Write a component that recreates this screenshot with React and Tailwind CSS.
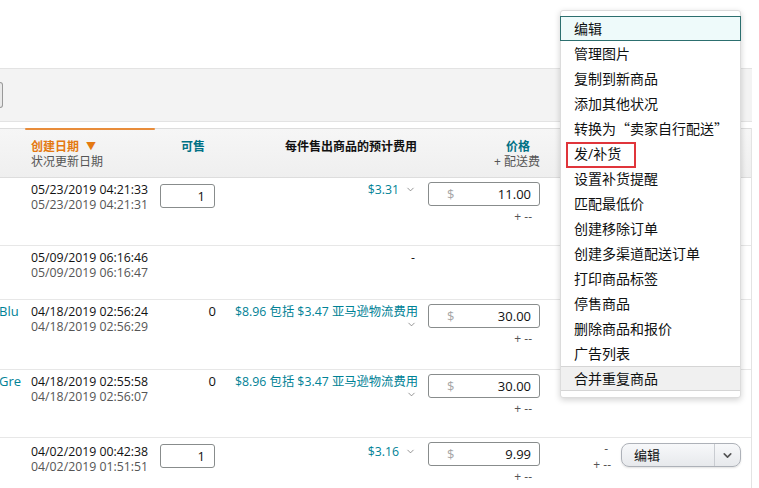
import React from "react";
import { ChevronDown } from "lucide-react";

const font = { fontFamily: '"Open Sans", "Noto Sans CJK SC", sans-serif' };
const cjk = { fontFamily: '"Noto Sans CJK SC", sans-serif' };

const menuItems = [
  "编辑",
  "管理图片",
  "复制到新商品",
  "添加其他状况",
  "转换为“卖家自行配送”",
  "发/补货",
  "设置补货提醒",
  "匹配最低价",
  "创建移除订单",
  "创建多渠道配送订单",
  "打印商品标签",
  "停售商品",
  "删除商品和报价",
  "广告列表",
  "合并重复商品",
];

const rows = [
  { h: "h-[68px]", pt: "pt-[4px]", name: "", created: "05/23/2019 04:21:33", updated: "05/23/2019 04:21:31", qty: "1", fee: "$3.31", price: "11.00" },
  { h: "h-[54px]", pt: "pt-[4px]", name: "", created: "05/09/2019 06:16:46", updated: "05/09/2019 06:16:47", fee: "-" },
  { h: "h-[70px]", pt: "pt-[4px]", name: "Blu", created: "04/18/2019 02:56:24", updated: "04/18/2019 02:56:29", zero: true, fee: "$8.96 包括 $3.47 亚马逊物流费用", long: true, price: "30.00" },
  { h: "h-[68px]", pt: "pt-[4px]", name: "Gre", created: "04/18/2019 02:55:58", updated: "04/18/2019 02:56:07", zero: true, fee: "$8.96 包括 $3.47 亚马逊物流费用", long: true, price: "30.00" },
  { h: "h-[52px]", pt: "pt-[6px]", name: "", created: "04/02/2019 00:42:38", updated: "04/02/2019 01:51:51", qty: "1", fee: "$3.16", price: "9.99", actions: true },
];

// split button used in the actions column
const EditButton = () => (
  <div className="flex h-[24px] w-[120px] overflow-hidden rounded-[8px] border border-[#adb1b8] bg-gradient-to-b from-[#f7f8fa] to-[#e7e9ec] shadow-[0_1px_2px_rgba(0,0,0,0.12)]">
    <div className="flex flex-1 items-center pl-[12px] text-[13px] text-[#0f1111]">编辑</div>
    <div className="flex w-[26px] items-center justify-center border-l border-[#c9ccd1]">
      <ChevronDown size={13} strokeWidth={3} className="text-[#555]" />
    </div>
  </div>
);

// menu label, quotes drawn with the CJK font so they get full-width cells
const MenuLabel = ({ text }) => {
  const parts = text.split(/([“”])/);
  return parts.map((p, i) =>
    p === "“" || p === "”" ? (
      <span key={i} style={cjk}>
        {p}
      </span>
    ) : (
      <span key={i}>{p}</span>
    )
  );
};

const Row = ({ r }) => (
  <div className={`grid grid-cols-[25px_130px_65px_202px_123px_206px] border-b border-[#e7e7e7] text-[12.3px] leading-[15px] ${r.h}`}>
    {/* product name, cut off on the left */}
    <div className={`overflow-hidden text-[13px] text-[#008296] whitespace-nowrap ${r.pt}`}>
      <span className="-ml-[1px]">{r.name}</span>
    </div>

    {/* dates */}
    <div className={`pl-[6px] whitespace-nowrap ${r.pt}`}>
      <div className="text-[#111]">{r.created}</div>
      <div className="text-[#555]">{r.updated}</div>
    </div>

    {/* available */}
    <div className="pt-[6px] pl-[5px]">
      {r.qty && (
        <div className="flex h-[24px] w-[55px] items-center justify-end rounded-[3px] border border-[#888c8c] pr-[9px] text-[13px] text-[#111]">
          {r.qty}
        </div>
      )}
      {r.zero && <div className="-mt-[2px] pr-[4px] text-right text-[13px] text-[#111]">0</div>}
    </div>

    {/* fees */}
    <div className={`pr-[4px] text-right ${r.pt}`}>
      {r.fee === "-" ? (
        <div className="pr-[3px] text-[#111]">-</div>
      ) : r.long ? (
        <div className="text-[#008296]">
          <div className="whitespace-nowrap">{r.fee}</div>
          <div className="flex justify-end pr-[1px]">
            <ChevronDown size={11} strokeWidth={1.5} className="text-[#666]" />
          </div>
        </div>
      ) : (
        <div className="flex items-center justify-end gap-[6px] text-[#008296]">
          <span>{r.fee}</span>
          <ChevronDown size={11} strokeWidth={1.5} className="mr-[2px] text-[#666]" />
        </div>
      )}
    </div>

    {/* price */}
    <div className="pl-[6px] pt-[4px]">
      {r.price && (
        <>
          <div className="flex h-[24px] w-[112px] items-center justify-between rounded-[3px] border border-[#888c8c] pl-[18px] pr-[8px] text-[13px]">
            <span className="text-[#a6a6a6]">$</span>
            <span className="text-[#111]">{r.price}</span>
          </div>
          <div className="mt-[3px] w-[104px] text-right text-[12px] text-[#555]">+ --</div>
        </>
      )}
    </div>

    {/* actions */}
    <div className="flex items-start pt-[3px]">
      {r.actions && (
        <>
          <div className="ml-[44px] w-[22px] text-right text-[12px] leading-[16px] text-[#555]">
            <div className="pr-[3px]">-</div>
            <div className="whitespace-nowrap">+ --</div>
          </div>
          <div className="ml-[10px] mt-[2px]">
            <EditButton />
          </div>
        </>
      )}
    </div>
  </div>
);

const App = () => {
  return (
    <div className="relative h-[488px] w-[759px] overflow-hidden bg-white" style={font}>
      <div className="h-[68px]" />

      {/* toolbar band */}
      <div className="flex h-[54px] w-[752px] items-center border-y border-[#e3e3e3] bg-[#f3f3f3]">
        <div className="h-[26px] w-[3px] rounded-r-[4px] border border-l-0 border-[#999] bg-[#e9e9e9]" />
      </div>

      <div className="h-[6px]" />

      {/* table */}
      <div className="w-[752px] border-r border-[#e3e3e3]">
        {/* header */}
        <div className="grid h-[50px] grid-cols-[25px_130px_65px_202px_123px_206px] border-y border-[#dddddd] bg-gradient-to-b from-[#f6f6f6] to-[#efefef] text-[12px] leading-[15px]">
          <div />
          <div className="relative pl-[6px] pt-[10px]">
            <div className="absolute left-0 right-0 -top-[1px] h-[2px] rounded-[1px] bg-[#e88c3a]" />
            <div className="flex items-center gap-[7px] font-bold text-[#e47911]">
              创建日期
              <span className="text-[10px]">▼</span>
            </div>
            <div className="text-[#555]">状况更新日期</div>
          </div>
          <div className="pl-[26px] pt-[10px] font-bold text-[#007185]">可售</div>
          <div className="pr-[5px] pt-[10px] text-right font-bold text-[#111]">每件售出商品的预计费用</div>
          <div className="pt-[10px] text-right">
            <div className="pr-[15px] font-bold text-[#007185]">价格</div>
            <div className="pr-[5px] text-[#555]">+ 配送费</div>
          </div>
          <div />
        </div>

        {rows.map((r, i) => (
          <Row key={i} r={r} />
        ))}
      </div>

      {/* open action menu */}
      <div className="absolute left-[560px] top-[10px] w-[181px] rounded-[3px] border border-[#dcdcdc] bg-white pt-[5px] pb-[6px] shadow-[0_2px_6px_rgba(0,0,0,0.18)]">
        {menuItems.map((item, i) => (
          <div
            key={item}
            className={`flex h-[25px] items-center pl-[13px] text-[14px] text-[#0f1111] whitespace-nowrap ${
              i === 0
                ? "-mx-[1px] border border-[#2c6f6f] bg-[#eefafa]"
                : i === menuItems.length - 1
                ? "border-y border-[#d5d5d5] bg-[#f0f0f0]"
                : ""
            }`}
          >
            <MenuLabel text={item} />
          </div>
        ))}
        {/* highlight box around 发/补货 */}
        <div className="absolute left-[5px] top-[131px] h-[26px] w-[70px] border-2 border-[#e0353b]" />
      </div>
    </div>
  );
};

export default App;
